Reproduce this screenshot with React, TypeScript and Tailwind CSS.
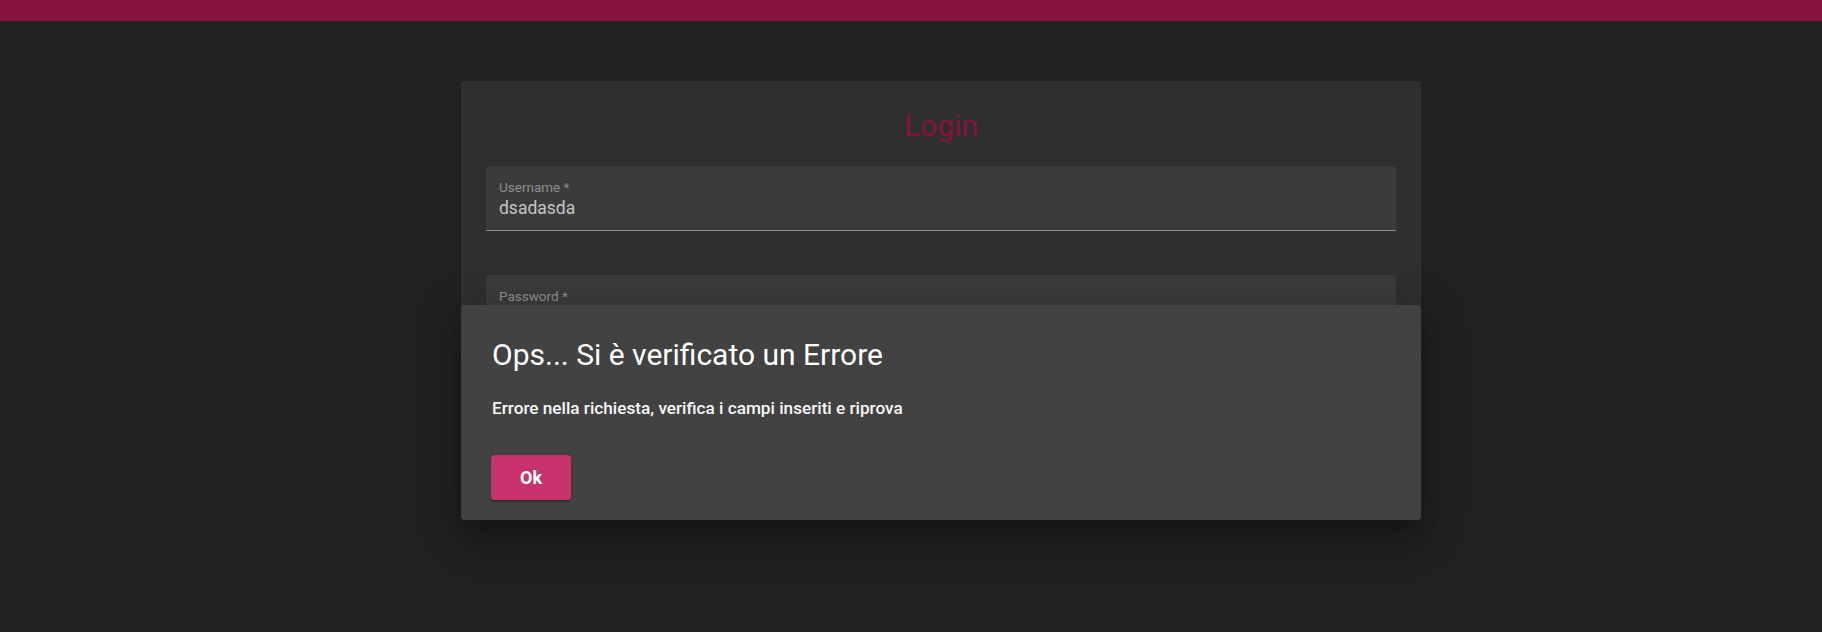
import React from "react";

const font = { fontFamily: "Roboto, 'Liberation Sans', sans-serif" };

function FilledField({ label, value }: { label: string; value?: string }) {
  return (
    <div className="h-[65px] rounded-t-[4px] bg-[#3b3b3b] border-b border-[#8c8c8c] px-[13px] pt-[13px]">
      <div className="text-[13.5px] leading-[16px] text-[#8e8e8e]">{label}</div>
      {value && (
        <div className="text-[17.5px] leading-[24px] text-[#c4c4c4] mt-[0.5px]">{value}</div>
      )}
    </div>
  );
}

export default function App() {
  return (
    <div className="relative h-[632px] w-full overflow-hidden bg-[#212121]" style={font}>
      <div className="h-[21px] bg-[#861240]" />

      <div className="flex justify-center pl-[60px] pt-[60px]">
        <div className="w-[960px] h-[390px] bg-[#2f2f2f] px-[25px] pt-[25px]">
          <h1 className="h-[40px] text-center text-[30px] leading-[40px] font-normal text-[#87123f]">
            Login
          </h1>
          <div className="mt-[20px] flex flex-col gap-[44px]">
            <FilledField label="Username *" value="dsadasda" />
            <FilledField label="Password *" />
          </div>
        </div>
      </div>

      {/* error dialog */}
      <div className="absolute left-[461px] top-[305px] w-[960px] h-[215px] rounded-[4px] bg-[#424242] px-[31px] pt-[32px] shadow-[0px_11px_15px_-7px_rgba(0,0,0,0.2),0px_24px_38px_3px_rgba(0,0,0,0.14),0px_9px_46px_8px_rgba(0,0,0,0.12)]">
        <h2 className="text-[30px] leading-[36px] font-normal text-white">
          Ops... Si è verificato un Errore
        </h2>
        <p className="mt-[23px] text-[17.2px] leading-[24px] font-medium text-[#f7f7f7]">
          Errore nella richiesta, verifica i campi inseriti e riprova
        </p>
        <button className="mt-[35px] ml-[-1px] flex h-[45px] w-[80px] items-center justify-center rounded-[4px] bg-[#c8336d] text-[18px] font-bold text-white shadow-[0px_3px_1px_-2px_rgba(0,0,0,0.2),0px_2px_2px_0px_rgba(0,0,0,0.14),0px_1px_5px_0px_rgba(0,0,0,0.12)]">
          Ok
        </button>
      </div>
    </div>
  );
}
